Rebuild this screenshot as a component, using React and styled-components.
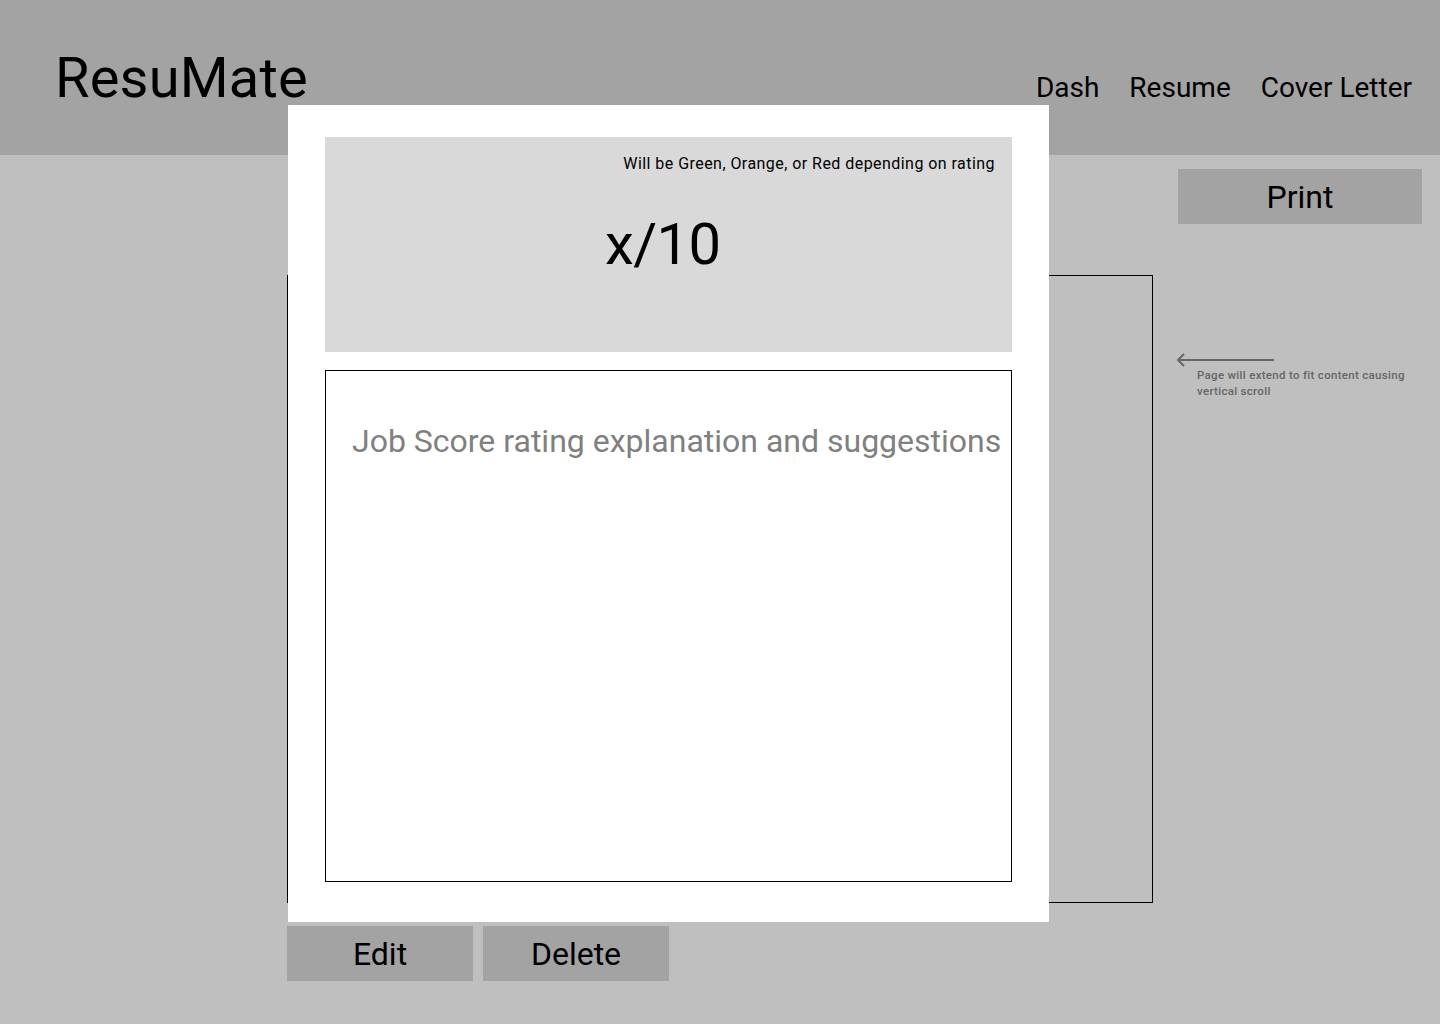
import styled, { createGlobalStyle } from 'styled-components';

const GlobalStyle = createGlobalStyle`
  html, body {
    margin: 0;
    padding: 0;
    background: #bfbfbf;
    font-family: Roboto, "Liberation Sans", sans-serif;
    color: #000;
  }
`;

const Page = styled.div`
  position: relative;
  width: 1440px;
  height: 1024px;
  overflow: hidden;
  background: #bfbfbf;
`;

const Header = styled.header`
  box-sizing: border-box;
  height: 155px;
  background: #a3a3a3;
  display: flex;
  align-items: baseline;
  justify-content: space-between;
  padding: 50px 28px 0 55px;
`;

const Logo = styled.div`
  font-size: 56px;
  line-height: 1;
  letter-spacing: 0.2px;
`;

const Nav = styled.nav`
  display: flex;
  gap: 30px;
`;

const NavLink = styled.span`
  font-size: 28px;
  line-height: 1;
`;

const Main = styled.main`
  display: flex;
  padding-left: 287px;
`;

const DocColumn = styled.div`
  display: flex;
  flex-direction: column;
  padding-top: 120px;
`;

const DocFrame = styled.div`
  box-sizing: border-box;
  width: 866px;
  height: 628px;
  border: 1px solid #000;
`;

const ButtonRow = styled.div`
  display: flex;
  gap: 10px;
  margin-top: 23px;
`;

const GreyButton = styled.button`
  box-sizing: border-box;
  width: ${p => p.$w || 186}px;
  height: 55px;
  border: none;
  background: #a3a3a3;
  font-family: Roboto, "Liberation Sans", sans-serif;
  font-size: 32px;
  color: #000;
  padding: 0;
  display: flex;
  align-items: center;
  justify-content: center;
`;

const SideColumn = styled.div`
  display: flex;
  flex-direction: column;
  margin-left: 25px;
  padding-top: 14px;
`;

const Note = styled.div`
  margin: 129px 0 0 -2px;
  display: flex;
  flex-direction: column;
`;

const NoteText = styled.p`
  margin: 0 0 0 21px;
  font-size: 11.5px;
  line-height: 16px;
  font-weight: 500;
  color: #666;
  letter-spacing: 0.3px;
  width: 230px;
`;

const Modal = styled.div`
  position: absolute;
  top: 105px;
  left: 288px;
  box-sizing: border-box;
  width: 761px;
  height: 817px;
  background: #fff;
  padding: 32px 37px;
  display: flex;
  flex-direction: column;
  gap: 18px;
`;

const ScoreBox = styled.div`
  height: 215px;
  background: #d9d9d9;
  display: flex;
  flex-direction: column;
`;

const ScoreHint = styled.div`
  align-self: flex-end;
  margin: 18px 17px 0 0;
  font-size: 16px;
  line-height: 18px;
  letter-spacing: 0.45px;
`;

const ScoreValue = styled.div`
  margin: 42px 0 0 280px;
  font-size: 58px;
  line-height: 1;
  letter-spacing: -0.6px;
`;

const Explanation = styled.div`
  box-sizing: border-box;
  height: 512px;
  border: 1px solid #000;
  padding: 54px 0 0 26px;
  font-size: 32px;
  line-height: 1;
  color: #808080;
`;

const ArrowLeft = () => (
  <svg width="100" height="14" viewBox="0 0 100 14">
    <path d="M2 7H98M8 1L2 7L8 13" fill="none" stroke="#666" strokeWidth="2" />
  </svg>
);

export default function App() {
  return (
    <Page>
      <GlobalStyle />
      <Header>
        <Logo>ResuMate</Logo>
        <Nav>
          <NavLink>Dash</NavLink>
          <NavLink>Resume</NavLink>
          <NavLink>Cover Letter</NavLink>
        </Nav>
      </Header>
      <Main>
        <DocColumn>
          <DocFrame />
          <ButtonRow>
            <GreyButton>Edit</GreyButton>
            <GreyButton>Delete</GreyButton>
          </ButtonRow>
        </DocColumn>
        <SideColumn>
          <GreyButton $w={244}>Print</GreyButton>
          <Note>
            <ArrowLeft />
            <NoteText>Page will extend to fit content causing vertical scroll</NoteText>
          </Note>
        </SideColumn>
      </Main>
      <Modal>
        <ScoreBox>
          <ScoreHint>Will be Green, Orange, or Red depending on rating</ScoreHint>
          <ScoreValue>x/10</ScoreValue>
        </ScoreBox>
        <Explanation>Job Score rating explanation and suggestions</Explanation>
      </Modal>
    </Page>
  );
}
